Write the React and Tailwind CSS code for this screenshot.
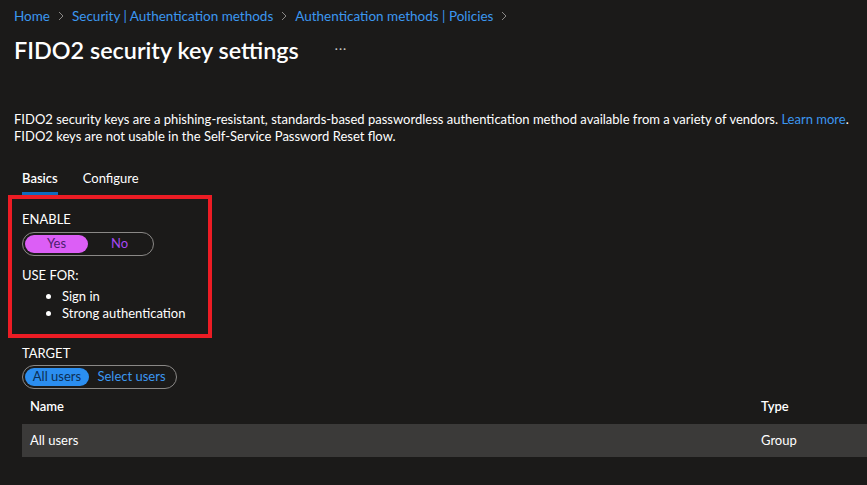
import React from 'react';

const font = { fontFamily: 'Lato, "Noto Sans", sans-serif' };

function Chevron() {
  return (
    <svg width="6" height="10" viewBox="0 0 6 10" className="mx-[8px] shrink-0">
      <path d="M1 1l4 4-4 4" fill="none" stroke="#8a8886" strokeWidth="1" />
    </svg>
  );
}

export default function App() {
  return (
    <div className="min-h-screen w-[867px] h-[485px] overflow-hidden bg-[#1b1a19] text-white text-[13px]" style={font}>
      {/* Breadcrumb */}
      <div className="flex items-center pl-[14px] pt-[7px] h-[25px] leading-[18px] text-[13.5px] text-[#3b97f0]">
        <span>Home</span>
        <Chevron />
        <span>Security | Authentication methods</span>
        <Chevron />
        <span>Authentication methods | Policies</span>
        <Chevron />
      </div>

      {/* Title */}
      <div className="flex items-center pl-[14px] mt-[9px] h-[32px]">
        <h1 className="text-[23.4px] font-semibold leading-[32px] whitespace-nowrap">FIDO2 security key settings</h1>
        <span className="ml-[36px] text-[#c8c6c4] text-[12px] tracking-[1px] -mt-[2px]">···</span>
      </div>

      {/* Description */}
      <p className="pl-[14px] mt-[45px] leading-[17px] whitespace-nowrap">
        FIDO2 security keys are a phishing-resistant, standards-based passwordless authentication method available from a variety of vendors.{' '}
        <span className="text-[#3b97f0]">Learn more</span>.
        <br />
        FIDO2 keys are not usable in the Self-Service Password Reset flow.
      </p>

      {/* Tabs */}
      <div className="flex gap-[25px] pl-[22px] mt-[24px]">
        <div className="flex flex-col">
          <span className="leading-[18px] font-semibold">Basics</span>
          <span className="mt-[5px] h-[3px] bg-[#0f6cbd]" />
        </div>
        <span className="leading-[18px]">Configure</span>
      </div>

      {/* Highlighted box */}
      <div className="ml-[8px] w-[204px] border-[4px] border-[#ec1c24] pl-[10px] pt-[12px] pb-[12px]">
        <div className="leading-[16px]">ENABLE</div>
        <div className="mt-[5px] flex items-center w-[132px] h-[24px] rounded-full border border-[#8a8886] p-[2px]">
          <span className="flex items-center justify-center w-[63px] h-[18px] rounded-full bg-[#dc5ef6] text-[#4b1d6e]">Yes</span>
          <span className="flex-1 text-center text-[#a548f2]">No</span>
        </div>
        <div className="mt-[11px] leading-[16px]">USE FOR:</div>
        <ul className="mt-[5px] leading-[17px]">
          <li className="flex items-center">
            <span className="ml-[24px] w-[5px] h-[5px] rounded-full bg-white" />
            <span className="ml-[11px]">Sign in</span>
          </li>
          <li className="flex items-center">
            <span className="ml-[24px] w-[5px] h-[5px] rounded-full bg-white" />
            <span className="ml-[11px]">Strong authentication</span>
          </li>
        </ul>
      </div>

      {/* Target */}
      <div className="pl-[22px] mt-[7px]">
        <div className="leading-[16px]">TARGET</div>
        <div className="mt-[4px] flex items-center w-[155px] h-[24px] rounded-full border border-[#8a8886] p-[2px]">
          <span className="flex items-center justify-center w-[64px] h-[18px] rounded-full bg-[#2b8ef0] text-[#0b2f55]">All users</span>
          <span className="flex-1 text-center text-[#3b97f0]">Select users</span>
        </div>
      </div>

      {/* Table */}
      <div className="pl-[22px]">
        <div className="flex h-[35px] items-center font-semibold">
          <span className="w-[739px] pl-[8px]">Name</span>
          <span>Type</span>
        </div>
        <div className="flex h-[33px] items-center bg-[#3b3a39]">
          <span className="w-[739px] pl-[8px]">All users</span>
          <span>Group</span>
        </div>
      </div>
    </div>
  );
}
